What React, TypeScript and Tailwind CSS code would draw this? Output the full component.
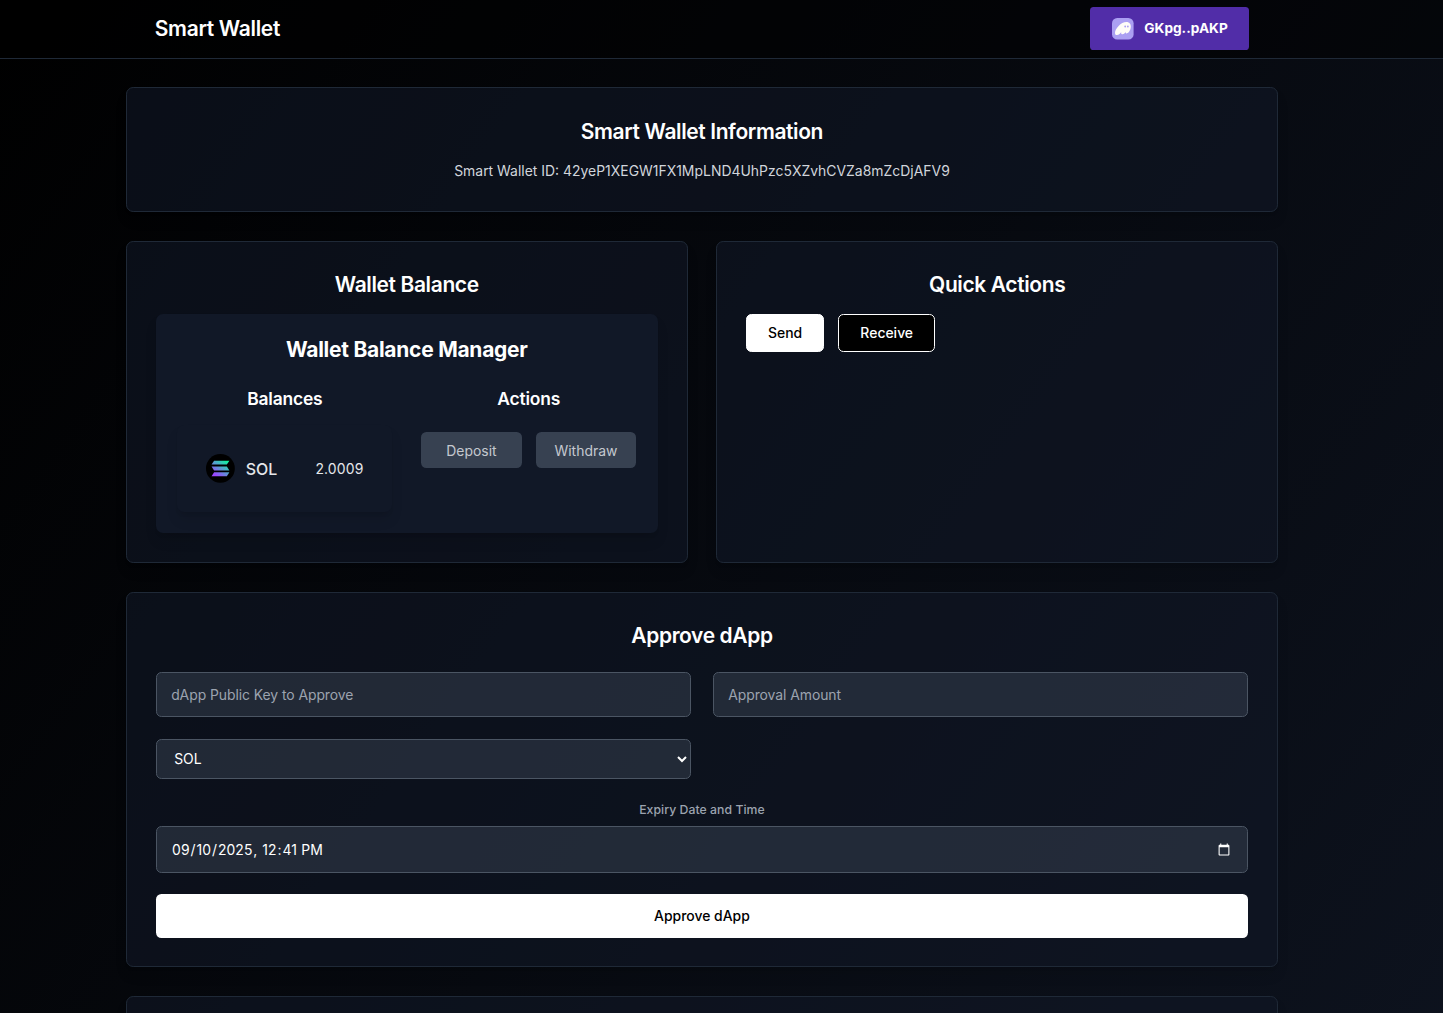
import type { ReactNode } from "react";

function PhantomIcon() {
  return (
    <svg viewBox="0 0 108 108" className="size-6 shrink-0" fill="none">
      <rect width="108" height="108" rx="26" fill="#AB9FF2" />
      <path
        fillRule="evenodd"
        clipRule="evenodd"
        fill="#FFFDF8"
        d="M46.5267 69.9229C42.0054 76.8509 34.4292 85.6182 24.348 85.6182C19.5824 85.6182 15 83.6563 15 75.1342C15 53.4305 44.6326 19.8327 72.1268 19.8327C87.768 19.8327 94 30.6846 94 43.0079C94 58.8258 83.7355 76.9122 73.5321 76.9122C70.2939 76.9122 68.7053 75.1342 68.7053 72.314C68.7053 71.5783 68.8275 70.7812 69.0719 69.9229C65.5893 75.8699 58.8685 81.3878 52.5754 81.3878C47.993 81.3878 45.6713 78.5063 45.6713 74.4598C45.6713 72.9884 45.9768 71.4556 46.5267 69.9229ZM83.6761 42.5794C83.6761 46.1704 81.5575 47.9658 79.1875 47.9658C76.7816 47.9658 74.6989 46.1704 74.6989 42.5794C74.6989 38.9885 76.7816 37.1931 79.1875 37.1931C81.5575 37.1931 83.6761 38.9885 83.6761 42.5794ZM70.2103 42.5795C70.2103 46.1704 68.0916 47.9658 65.7216 47.9658C63.3157 47.9658 61.233 46.1704 61.233 42.5795C61.233 38.9885 63.3157 37.1931 65.7216 37.1931C68.0916 37.1931 70.2103 38.9885 70.2103 42.5795Z"
      />
    </svg>
  );
}

function SolanaIcon() {
  return (
    <svg viewBox="0 0 32 32" className="size-8">
      <defs>
        <linearGradient id="sol" gradientUnits="userSpaceOnUse" x1="23" y1="8" x2="11" y2="24">
          <stop offset="0" stopColor="#14F1A0" />
          <stop offset="1" stopColor="#9B45FF" />
        </linearGradient>
      </defs>
      <circle cx="16" cy="16" r="16" fill="#000" />
      <g fill="url(#sol)">
        <path d="M9 7.4h17l-2.8 4.4H6.2z" />
        <path d="M6.2 13.9h17l2.8 4.4H9z" />
        <path d="M9 20.3h17l-2.8 4.4H6.2z" />
      </g>
    </svg>
  );
}

const panel = "rounded-lg border border-[#1f2937] bg-[#111827]/60 p-8 shadow-lg";

function Card({ title, children }: { title: string; children?: ReactNode }) {
  return (
    <section className={panel}>
      <h2 className="mb-[15px] pt-px text-center text-[23.3px] leading-8 font-semibold tracking-[-0.018em]">{title}</h2>
      {children}
    </section>
  );
}

const field = "w-full rounded-md border border-[#4b5563] bg-[#374151]/50 px-4 text-white placeholder:text-[#9ca3af] placeholder:opacity-100";
const muted = "h-10 flex-1 rounded-md bg-[#374151] pt-px text-[#c4c8cf]";

export default function App() {
  return (
    <div className="h-screen overflow-hidden bg-black">
      <div className="h-[2222px] bg-linear-to-br/srgb from-black to-[#111827] font-['Inter',sans-serif] text-[15.5px] leading-6 text-white scheme-dark [zoom:0.9]">
        <header className="border-b border-[#1f2937] bg-black/50 pr-[43.4px]">
          <div className="mx-auto flex h-16 max-w-7xl items-center justify-between px-8">
            <h1 className="pt-0.5 text-[23.3px] leading-8 font-semibold tracking-[-0.015em]">Smart Wallet</h1>
            <button className="flex h-12 w-[176.5px] items-center rounded-[4px] bg-[#512da8] px-6 font-bold">
              <PhantomIcon />
              <span className="ml-3 text-[15.2px]">GKpg..pAKP</span>
            </button>
          </div>
        </header>

        <main className="pr-[43.4px]">
          <div className="mx-auto flex max-w-7xl flex-col gap-8 py-8">
            <Card title="Smart Wallet Information">
              <p className="text-center text-[#d1d5db]">
                Smart Wallet ID: 42yeP1XEGW1FX1MpLND4UhPzc5XZvhCVZa8mZcDjAFV9
              </p>
            </Card>

            <div className="grid grid-cols-2 gap-8">
              <Card title="Wallet Balance">
                <div className="rounded-lg bg-[#111827] p-6 shadow-lg">
                  <h2 className="mb-[23px] pt-px text-center text-[23.3px] leading-8 font-bold tracking-[-0.012em]">
                    Wallet Balance Manager
                  </h2>
                  <div className="grid grid-cols-2 gap-8">
                    <div>
                      <h3 className="mb-4 text-center text-[19.4px] leading-7 font-semibold tracking-[-0.011em]">
                        Balances
                      </h3>
                      <div className="flex items-center justify-between rounded-lg bg-[#111827] p-8 text-[#e5e7eb] shadow-lg">
                        <div className="flex items-center gap-3">
                          <SolanaIcon />
                          <span className="pt-1 text-[17.7px] font-medium">SOL</span>
                        </div>
                        <span className="pt-0.5 tracking-[0.012em]">2.0009</span>
                      </div>
                    </div>
                    <div>
                      <h3 className="mb-6 text-center text-[19.4px] leading-7 font-semibold tracking-[-0.011em]">
                        Actions
                      </h3>
                      <div className="flex gap-[15.6px]">
                        <button className={muted}>Deposit</button>
                        <button className={muted}>Withdraw</button>
                      </div>
                    </div>
                  </div>
                </div>
              </Card>
              <Card title="Quick Actions">
                <div className="flex gap-4">
                  <button className="h-[42.5px] w-[86.5px] rounded-md border border-white bg-white font-medium text-black">
                    Send
                  </button>
                  <button className="h-[42.5px] w-[107.4px] rounded-md border border-white bg-black font-medium text-white">
                    Receive
                  </button>
                </div>
              </Card>
            </div>

            <Card title="Approve dApp">
              <div className="mt-[23px] flex flex-col gap-6">
                <div className="grid grid-cols-2 gap-6">
                  <input className={`${field} py-3 tracking-[-0.005em]`} placeholder="dApp Public Key to Approve" />
                  <input className={`${field} py-3 tracking-[-0.005em]`} placeholder="Approval Amount" />
                  <select className={`${field} h-[44.5px]`}>
                    <option>SOL</option>
                  </select>
                </div>
                <div>
                  <label className="mt-[0.7px] mb-2 block text-center text-[13.6px] leading-5 font-medium tracking-[0.004em] text-[#9ca3af]">
                    Expiry Date and Time
                  </label>
                  <input
                    type="datetime-local"
                    defaultValue="2025-09-10T12:41"
                    className={`${field} block h-[52px] tracking-[0.004em]`}
                  />
                </div>
                <button className="h-12 rounded-md bg-white pb-px font-medium text-black">Approve dApp</button>
              </div>
            </Card>

            <section className={`${panel} h-60`} />
          </div>
        </main>
      </div>
    </div>
  );
}
